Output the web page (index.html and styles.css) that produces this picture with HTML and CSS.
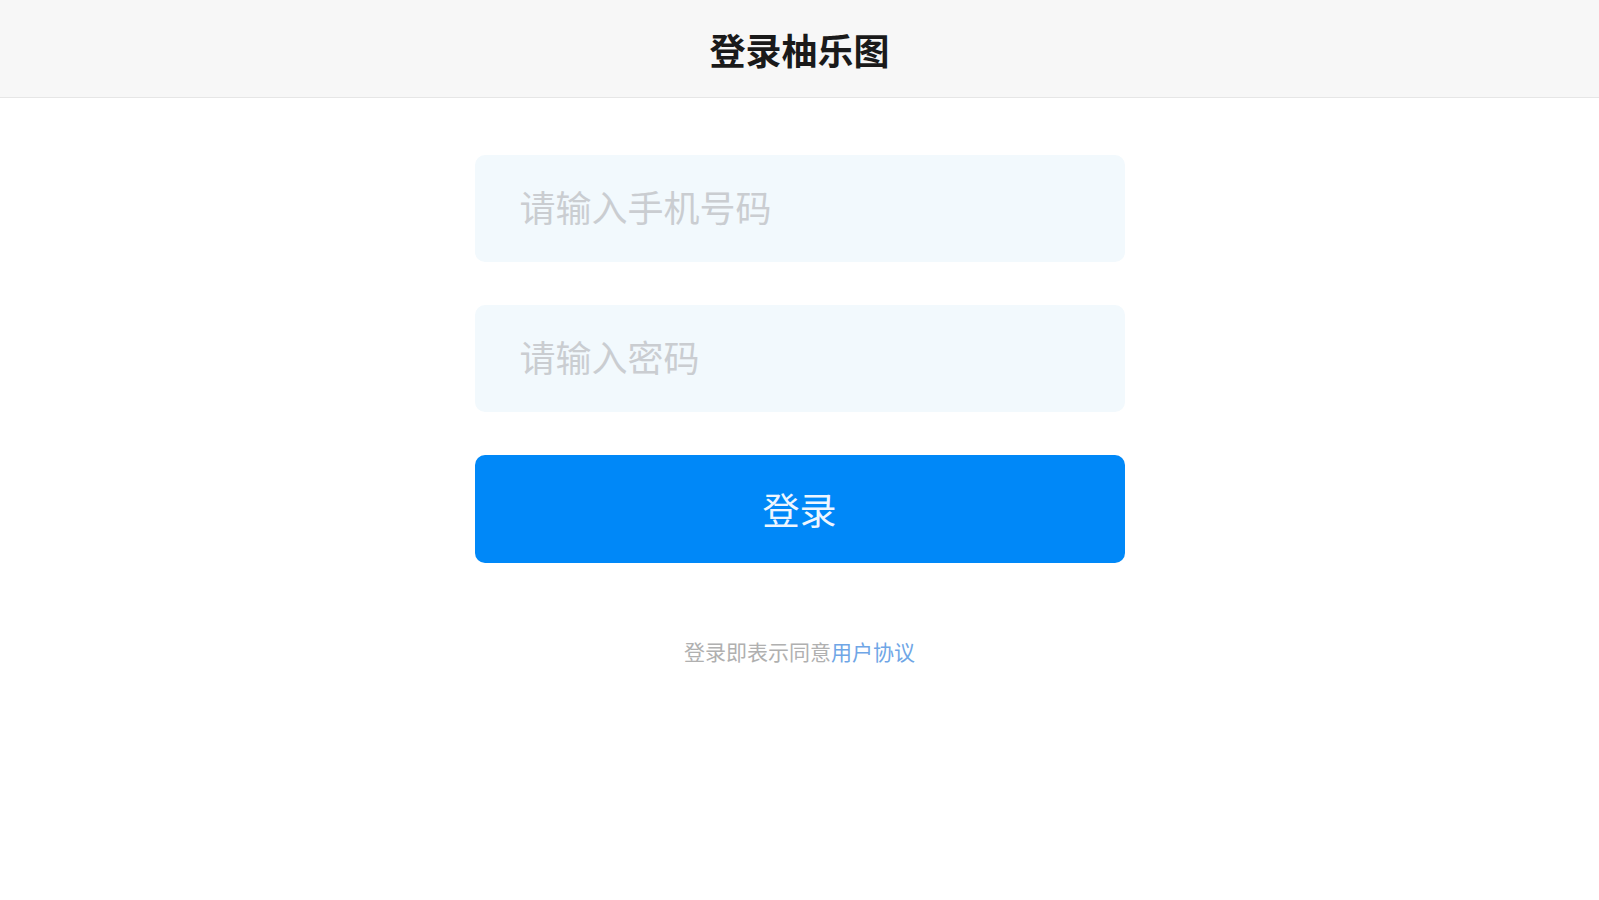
FILE: index.html
```
<!DOCTYPE html>
<html lang="zh-CN">
<head>
  <meta charset="UTF-8" />
  <meta name="viewport" content="width=device-width, initial-scale=1.0"/>
  <title>登录柚乐图</title>
  <link rel="stylesheet" href="styles.css">
</head>
<body>

  <!-- Header -->
  <div class="header">
    <h1>登录柚乐图</h1>
  </div>

  <!-- Login form -->
  <div class="login">
    <input class="field" type="tel" placeholder="请输入手机号码">
    <input class="field" type="password" placeholder="请输入密码">
    <button class="submit">登录</button>
    <p class="agree">登录即表示同意<a href="#">用户协议</a></p>
  </div>

</body>
</html>
```

FILE: styles.css
```
body {
  margin: 0;
  background: #fff;
  font-family: "Noto Sans CJK SC", "Noto Sans", sans-serif;
  color: #222;
}

.header {
  height: 97px;
  background: #f7f7f7;
  border-bottom: 1px solid #e6e6e6;
  display: flex;
  align-items: center;
  justify-content: center;
}

.header h1 {
  margin: 0;
  font-size: 36px;
  font-weight: bold;
  color: #1a1a1a;
}

.login {
  width: 650px;
  margin: 57px auto 0;
  display: flex;
  flex-direction: column;
  gap: 43px;
}

.field {
  height: 107px;
  box-sizing: border-box;
  padding: 0 45px 6px;
  border: none;
  border-radius: 10px;
  background: #f2f9fd;
  font-family: inherit;
  font-size: 36px;
  outline: none;
}

.field::placeholder {
  color: #cacdd1;
}

.submit {
  height: 108px;
  border: none;
  border-radius: 10px;
  background: #0088f8;
  color: #eef6ff;
  font-family: inherit;
  font-size: 37px;
  cursor: pointer;
}

.agree {
  margin: 30px 0 0;
  text-align: center;
  font-size: 21px;
  color: #b0b0b0;
}

.agree a {
  color: #6fa6e6;
  text-decoration: none;
}
```
